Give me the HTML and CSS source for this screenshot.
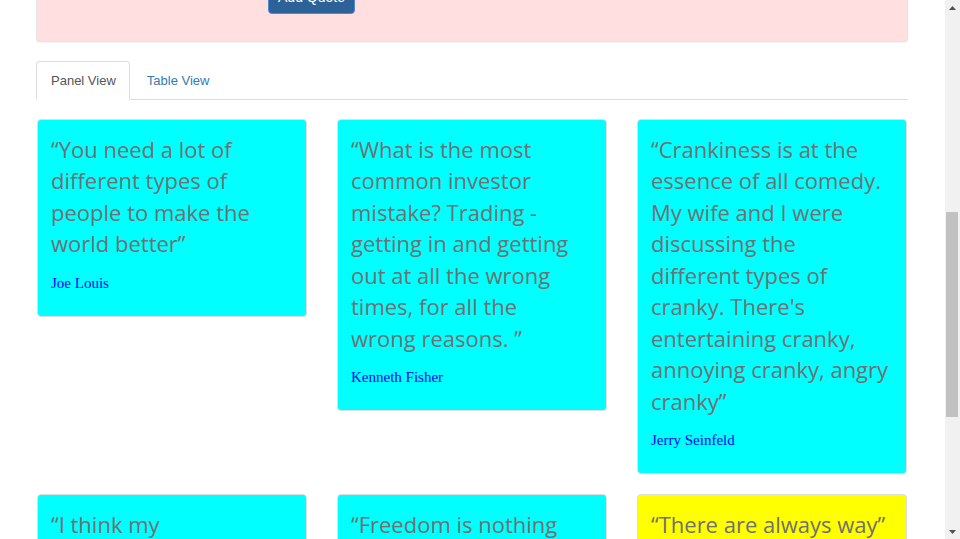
FILE: index.html
```html
<!DOCTYPE html>
<html lang="en">
<head>
<meta charset="utf-8">
<title>Quotes</title>
<link rel="stylesheet" href="styles.css">
</head>
<body>
<div class="screen">
  <div class="viewport">
    <div class="page">
      <div class="well">
        <button class="btn" type="button">Add Quote</button>
      </div>

      <ul class="tabs">
        <li class="tab active">Panel View</li>
        <li class="tab">Table View</li>
      </ul>

      <div class="grid">
        <div class="card">
          <p class="quote">“You need a lot of<br>different types of<br>people to make the<br>world better”</p>
          <div class="author">Joe Louis</div>
        </div>
        <div class="card">
          <p class="quote">“What is the most<br>common investor<br>mistake? Trading -<br>getting in and getting<br>out at all the wrong<br>times, for all the<br>wrong reasons. ”</p>
          <div class="author">Kenneth Fisher</div>
        </div>
        <div class="card">
          <p class="quote">“Crankiness is at the<br>essence of all comedy.<br>My wife and I were<br>discussing the<br>different types of<br>cranky. There's<br>entertaining cranky,<br>annoying cranky, angry<br>cranky”</p>
          <div class="author">Jerry Seinfeld</div>
        </div>
        <div class="card">
          <p class="quote">“I think my</p>
        </div>
        <div class="card">
          <p class="quote">“Freedom is nothing</p>
        </div>
        <div class="card yellow">
          <p class="quote">“There are always way”</p>
        </div>
      </div>
    </div>
  </div>

  <div class="scrollbar">
    <div class="sb-arrow">
      <svg width="7" height="4" viewBox="0 0 7 4"><polygon points="0,4 3.5,0 7,4" fill="#505050"/></svg>
    </div>
    <div class="sb-track"><div class="sb-thumb"></div></div>
    <div class="sb-arrow">
      <svg width="7" height="4" viewBox="0 0 7 4"><polygon points="0,0 7,0 3.5,4" fill="#505050"/></svg>
    </div>
  </div>
</div>
</body>
</html>
```

FILE: styles.css
```css
html, body {
  margin: 0;
  height: 539px;
  overflow: hidden;
  background: #fff;
}

.screen {
  display: flex;
  height: 539px;
}

.viewport {
  flex: 1;
  min-width: 0;
  overflow: hidden;
}

.page {
  margin-top: -50px;
  padding: 0 38px 0 37px;
}

.well {
  margin: 0 -1px 19px;
  padding: 29px 0 27px 231px;
  background: #ffdfdf;
  border: 1px solid #e3e3e3;
  border-radius: 4px;
  box-shadow: 0 1px 1px rgba(0, 0, 0, 0.05);
}

.btn {
  display: block;
  width: 87px;
  height: 34px;
  background: #2c6298;
  border: 1px solid #4f88cc;
  border-radius: 4px;
  color: #fff;
  font: 14px "Liberation Sans", Arial, sans-serif;
  padding: 0;
}

.tabs {
  list-style: none;
  margin: 0 -1px 19px;
  padding: 0;
  display: flex;
  border-bottom: 1px solid #ddd;
}

.tab {
  margin: 0 2px -1px 0;
  padding: 9px 13px 8px 14px;
  border: 1px solid transparent;
  border-radius: 4px 4px 0 0;
  font: 13px/20px "Liberation Sans", Arial, sans-serif;
  color: #337ab7;
}

.tab.active {
  color: #555;
  background: #fff;
  border-color: #ddd #ddd transparent;
}

.grid {
  display: grid;
  grid-template-columns: repeat(3, 270px);
  column-gap: 30px;
  row-gap: 20px;
  align-items: start;
}

.card {
  background: #00ffff;
  border: 1px solid #dddddd;
  border-radius: 4px;
  padding: 14px 13px 22px;
}

.card.yellow {
  background: #ffff00;
}

.quote {
  margin: 0 0 13px;
  font-family: "Open Sans", "DejaVu Sans", sans-serif;
  font-size: 22px;
  line-height: 31.43px;
  color: #707070;
  white-space: nowrap;
}

.author {
  font-family: "Liberation Serif", "Times New Roman", serif;
  font-size: 15px;
  line-height: 21px;
  color: #0000ff;
}

.scrollbar {
  width: 15px;
  background: #f1f1f1;
  display: flex;
  flex-direction: column;
}

.sb-arrow {
  height: 15px;
  display: flex;
  align-items: center;
  justify-content: center;
}

.sb-arrow svg {
  display: block;
}

.sb-track {
  flex: 1;
}

.sb-thumb {
  margin: 197px 2px 0 1px;
  height: 205px;
  background: #c1c1c1;
}
```
